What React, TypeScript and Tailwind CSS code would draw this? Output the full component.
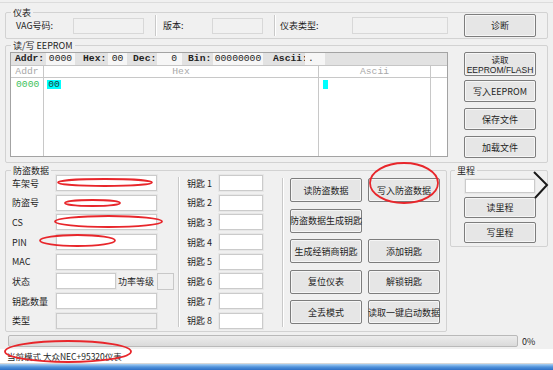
import React from "react";

function Btn({ children, className }: { children: React.ReactNode; className: string }) {
  return (
    <div
      className={
        "flex items-center justify-center text-center border border-[#7d7d7d] bg-[#e6e6e6] rounded-[2px] shadow-[inset_0_0_0_1px_#f6f6f6] text-[9px] leading-[11px] text-[#1e1e1e] whitespace-nowrap " +
        className
      }
    >
      {children}
    </div>
  );
}

function Inp({ className }: { className: string }) {
  return <div className={"shrink-0 border border-[#cbcbcb] shadow-[0_0_0_1px_#e7e7e7] " + className} />;
}

function Group({
  legend,
  className,
  legendClass,
  children,
}: {
  legend: string;
  className: string;
  legendClass: string;
  children?: React.ReactNode;
}) {
  return (
    <div className={"relative border border-[#d2d2d2] rounded-[2px] " + className}>
      <span
        className={
          "absolute top-[-6px] px-[2px] bg-[#f0f0f0] text-[9px] leading-[11px] text-[#1e1e1e] " + legendClass
        }
      >
        {legend}
      </span>
      {children}
    </div>
  );
}

const leftRows = ["车架号", "防盗号", "CS", "PIN", "MAC", "状态", "钥匙数量", "类型"];

export default function App() {
  return (
    <div className="relative w-[553px] h-[370px] overflow-hidden bg-[#f0f0f0] flex flex-col font-['Noto_Sans_CJK_SC','Noto_Sans',sans-serif] text-[9px] leading-[11px] text-[#1e1e1e]">
      <div className="h-[2px] shrink-0" />
      <div className="h-px shrink-0 bg-[#dcdcdc]" />

      {/* 仪表 */}
      <Group legend="仪表" className="mt-[9px] ml-[5px] w-[543px] h-[27px] shrink-0 flex items-center" legendClass="left-[5px]">
        <span className="ml-[10px] w-[57px]">VAG号码:</span>
        <div className="w-[71px] h-[16px] border border-[#d8d8d8] bg-[#f1f1f1]" />
        <div className="ml-[11px] w-[2px] h-[21px] border-l border-[#c9c9c9] bg-white" />
        <span className="ml-[6px] w-[49px]">版本:</span>
        <div className="w-[51px] h-[16px] border border-[#d8d8d8] bg-[#f1f1f1]" />
        <div className="ml-[11px] w-[2px] h-[21px] border-l border-[#c9c9c9] bg-white" />
        <span className="ml-[4px] w-[72px]">仪表类型:</span>
        <div className="w-[96px] h-[17px] border border-[#d8d8d8] bg-[#f1f1f1]" />
        <Btn className="ml-[16px] w-[72px] h-[23px]">诊断</Btn>
      </Group>

      {/* 读/写 EEPROM */}
      <Group legend="读/写 EEPROM" className="mt-[6px] ml-[5px] w-[543px] h-[118px] shrink-0 flex" legendClass="left-[5px]">
        <div className="ml-[4px] mt-[6px] w-[438px] h-[105px] border border-[#a3a3a3] bg-white flex flex-col font-['Liberation_Mono',monospace] text-[9.7px] leading-[12px] text-[#222]">
          <div className="h-[13px] shrink-0 bg-[#e2e2e2] border-b border-[#c6c6c6] flex items-center">
            <span className="ml-[4px] w-[31px] font-bold">Addr:</span>
            <span className="w-[29px] bg-[#f6f6f6] text-center">0000</span>
            <span className="ml-[8px] w-[25px] font-bold">Hex:</span>
            <span className="w-[19px] bg-[#f6f6f6] text-center">00</span>
            <span className="ml-[6px] w-[24px] font-bold">Dec:</span>
            <span className="w-[25px] bg-[#f6f6f6] text-right pr-[5px]">0</span>
            <span className="ml-[6px] w-[25px] font-bold">Bin:</span>
            <span className="w-[50px] bg-[#f6f6f6] text-center">00000000</span>
            <span className="ml-[10px] w-[32px] font-bold">Ascii:</span>
            <span className="w-[20px] bg-[#f6f6f6] pl-[3px]">.</span>
          </div>
          <div className="flex flex-1">
            <div className="w-[33px] border-r border-[#c8c8c8] flex flex-col">
              <div className="h-[12px] border-b border-[#c8c8c8] text-center text-[#a9a9a9]">Addr</div>
              <div className="mt-[1px] pl-[5px] text-[#3dbf5b]">0000</div>
            </div>
            <div className="w-[275px] border-r border-[#c8c8c8] flex flex-col">
              <div className="h-[12px] border-b border-[#c8c8c8] text-center text-[#a9a9a9]">Hex</div>
              <div className="mt-[2px] ml-[3px] w-[14px] h-[9px] bg-[#00ffff] leading-[9px] text-center text-[#1a3a3a]">00</div>
            </div>
            <div className="w-[112px] border-r border-[#c8c8c8] flex flex-col">
              <div className="h-[12px] border-b border-[#c8c8c8] text-center text-[#a9a9a9]">Ascii</div>
              <div className="mt-[2px] ml-[4px] w-[5px] h-[9px] bg-[#00ffff]" />
            </div>
            <div className="flex-1 flex flex-col">
              <div className="h-[12px] border-b border-[#c8c8c8]" />
            </div>
          </div>
        </div>
        <div className="ml-[16px] flex flex-col">
          <Btn className="mt-[6px] w-[72px] h-[24px] flex-col">
            <span className="block text-[8.5px] leading-[12px]">读取</span>
            <span className="block font-['Liberation_Sans',sans-serif] text-[8.5px] leading-[10px]">EEPROM/FLASH</span>
          </Btn>
          <Btn className="mt-[4px] w-[72px] h-[22px]">写入EEPROM</Btn>
          <Btn className="mt-[6px] w-[72px] h-[22px]">保存文件</Btn>
          <Btn className="mt-[6px] w-[72px] h-[22px]">加载文件</Btn>
        </div>
      </Group>

      {/* bottom groups */}
      <div className="mt-[7px] ml-[5px] flex shrink-0 items-start">
        <Group legend="防盗数据" className="w-[442px] h-[162px] flex" legendClass="left-[5px]">
          {/* left column */}
          <div className="w-[151px] shrink-0 pl-[6px] pt-[4px] flex flex-col gap-[3.7px]">
            {leftRows.map((l) => (
              <div key={l} className="flex items-center h-[16px] whitespace-nowrap">
                <span className="w-[44px] shrink-0">{l}</span>
                {l === "状态" ? (
                  <>
                    <Inp className="w-[60px] h-[16px] bg-white" />
                    <span className="ml-[2px] w-[38px] shrink-0">功率等级</span>
                    <div className="ml-[1px] w-[17px] h-[17px] shrink-0 border border-[#c8c8c8] bg-[#f0f0f0]" />
                  </>
                ) : l === "类型" ? (
                  <Inp className="w-[101px] h-[16px] bg-[#f0f0f0]" />
                ) : (
                  <Inp className="w-[101px] h-[16px] bg-white" />
                )}
              </div>
            ))}
          </div>
          <div className="ml-[21px] mt-[6px] w-[2px] h-[150px] shrink-0 border-l border-[#c9c9c9] bg-white" />
          {/* keys */}
          <div className="ml-[7px] pt-[4px] flex flex-col gap-[3.7px] shrink-0">
            {[1, 2, 3, 4, 5, 6, 7, 8].map((n) => (
              <div key={n} className="flex items-center h-[16px] whitespace-nowrap">
                <span className="w-[32px] shrink-0">钥匙 {n}</span>
                <Inp className="w-[44px] h-[16px] bg-white" />
              </div>
            ))}
          </div>
          <div className="ml-[19px] mt-[7px] w-[2px] h-[149px] shrink-0 border-l border-[#c9c9c9] bg-white" />
          {/* buttons */}
          <div className="ml-[6px] pt-[7px] grid grid-cols-[72px_72px] gap-x-[6px] gap-y-[6.5px] auto-rows-[24px] shrink-0">
            <Btn className="h-[24px]">读防盗数据</Btn>
            <Btn className="h-[24px]">写入防盗数据</Btn>
            <Btn className="h-[24px]">防盗数据生成钥匙</Btn>
            <div />
            <Btn className="h-[24px]">生成经销商钥匙</Btn>
            <Btn className="h-[24px]">添加钥匙</Btn>
            <Btn className="h-[24px]">复位仪表</Btn>
            <Btn className="h-[24px]">解锁钥匙</Btn>
            <Btn className="h-[24px]">全丢模式</Btn>
            <Btn className="h-[24px]">读取一键启动数据</Btn>
          </div>
        </Group>

        <Group legend="里程" className="ml-[3px] w-[98px] h-[77px] flex flex-col" legendClass="left-[4px]">
          <Inp className="ml-[14px] mt-[8px] w-[70px] h-[14px] bg-white" />
          <Btn className="ml-[13px] mt-[4px] w-[72px] h-[21px]">读里程</Btn>
          <Btn className="ml-[13px] mt-[4px] w-[72px] h-[21px]">写里程</Btn>
        </Group>
      </div>

      {/* progress */}
      <div className="mt-[3px] ml-[8px] flex items-center shrink-0">
        <div className="w-[510px] h-[12px] border border-[#b9b9b9] rounded-[2px] bg-gradient-to-b from-[#ececec] to-[#dadada]" />
        <span className="ml-[4px]">0%</span>
      </div>

      {/* status bar */}
      <div className="mt-[2px] h-[14px] shrink-0 bg-white flex items-center pl-[7px]">
        <span className="text-[8.5px]">当前模式 大众NEC+95320仪表</span>
      </div>
      <div className="h-px shrink-0 bg-[#d8d8d8]" />
      <div className="flex-1 bg-gradient-to-b from-[#a9d0f2] via-[#4f92da] to-[#2f6fc5]" />

      {/* annotations */}
      <svg className="absolute left-0 top-0 pointer-events-none" width="553" height="370" viewBox="0 0 553 370">
        <g fill="none" stroke="#e8262b" strokeWidth="1.8">
          <ellipse cx="105" cy="182.5" rx="47" ry="3.5" />
          <ellipse cx="92.5" cy="203" rx="27.5" ry="3" />
          <ellipse cx="108.5" cy="221.5" rx="53.5" ry="5.5" />
          <ellipse cx="77.5" cy="240.5" rx="37.5" ry="5.5" />
          <ellipse cx="404" cy="183" rx="34" ry="20" />
          <ellipse cx="68" cy="351.5" rx="63" ry="10.5" />
        </g>
        <polyline points="534,172 547,185 535,198" fill="none" stroke="#1a1a1a" strokeWidth="2" />
      </svg>
    </div>
  );
}
